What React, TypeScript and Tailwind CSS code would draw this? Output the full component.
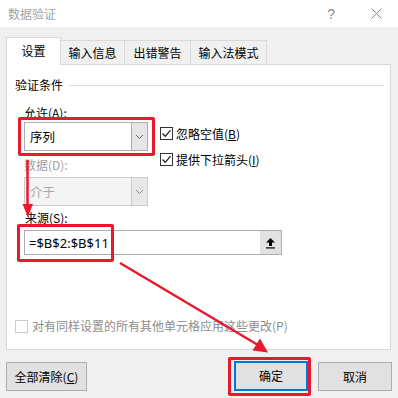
import React from "react";

const font = { fontFamily: '"Noto Sans CJK SC", "Noto Sans", sans-serif' };

function Chevron({ color = "#606060" }: { color?: string }) {
  return (
    <svg width="9" height="6" viewBox="0 0 9 6">
      <path d="M1 1 L4.5 4.5 L8 1" fill="none" stroke={color} strokeWidth="1" />
    </svg>
  );
}

function Check({ checked }: { checked: boolean }) {
  return (
    <div
      className={
        "w-[13px] h-[13px] bg-white border flex items-center justify-center " +
        (checked ? "border-[#333333]" : "border-[#cccccc]")
      }
    >
      {checked && (
        <svg width="11" height="11" viewBox="0 0 11 11">
          <path d="M1.5 5.5 L4.3 8.3 L9.5 2.2" fill="none" stroke="#222" strokeWidth="1.3" />
        </svg>
      )}
    </div>
  );
}

function Combo({ text, disabled }: { text: string; disabled?: boolean }) {
  return (
    <div
      className={
        "w-[124px] h-[29px] border flex " +
        (disabled ? "border-[#cccccc] bg-[#f4f4f4]" : "border-[#adadad] bg-white")
      }
    >
      <div className={"flex-1 flex items-center pl-[5px] text-[12.5px] " + (disabled ? "text-[#a8a8a8]" : "text-black")}>
        {text}
      </div>
      <div
        className={
          "w-[16px] flex items-center justify-center border-l " +
          (disabled ? "border-[#cccccc] bg-[#e8e8e8]" : "border-[#adadad] bg-[#e5e5e5]")
        }
      >
        <Chevron color={disabled ? "#8a8a8a" : "#606060"} />
      </div>
    </div>
  );
}

export default function App() {
  return (
    <div className="relative w-[398px] h-[398px] bg-[#f0f0f0] overflow-hidden text-[12px] leading-[16px]" style={font}>
      {/* title bar */}
      <div className="h-[27px] bg-white flex items-center pl-[8px] text-[#a3a3a3]">
        <span className="text-[12px]">数据验证</span>
        <span className="ml-auto mr-[36px] text-[14px] text-[#8a8a8a]" style={{ fontFamily: '"Liberation Sans", sans-serif' }}>?</span>
        <svg width="11" height="11" viewBox="0 0 11 11" className="mr-[16px]">
          <path d="M0.5 0.5 L10.5 10.5 M10.5 0.5 L0.5 10.5" stroke="#8a8a8a" strokeWidth="1" />
        </svg>
      </div>

      {/* tabs */}
      <div className="mt-[10px] pl-[6px] flex items-end h-[27px]">
        <div className="relative z-10 w-[55px] h-[28px] -mb-px bg-white border border-b-0 border-[#d9d9d9] flex items-center justify-center pb-[2px] text-black">
          设置
        </div>
        <div className="w-[64px] h-[24px] border border-l-0 border-b-0 border-[#d9d9d9] flex items-center justify-center text-black">输入信息</div>
        <div className="w-[66px] h-[24px] border border-l-0 border-b-0 border-[#d9d9d9] flex items-center justify-center text-black">出错警告</div>
        <div className="w-[76px] h-[24px] border border-l-0 border-b-0 border-[#d9d9d9] flex items-center justify-center text-black">输入法模式</div>
      </div>

      {/* panel */}
      <div className="ml-[6px] w-[385px] h-[286px] bg-white border border-[#d9d9d9] flex flex-col">
        <div className="mt-[12px] flex items-center pl-[8px] pr-[6px] text-black">
          <span>验证条件</span>
          <div className="flex-1 ml-[6px] h-px bg-[#dcdcdc]" />
        </div>

        <div className="mt-[12px] pl-[17px] flex">
          <div className="flex flex-col">
            <div className="h-[16px] text-black">允许(A):</div>
            <div className="mt-[1px]">
              <Combo text="序列" />
            </div>
            <div className="mt-[6px] h-[16px] text-[#a0a0a0]">数据(D):</div>
            <div className="mt-[4px]">
              <Combo text="介于" disabled />
            </div>
          </div>
          <div className="ml-[12px] flex flex-col gap-[13px] pt-[22px]">
            <div className="flex items-center gap-[3px] h-[13px]">
              <Check checked />
              <span className="text-black">
                忽略空值(<span className="underline">B</span>)
              </span>
            </div>
            <div className="flex items-center gap-[3px] h-[13px]">
              <Check checked />
              <span className="text-black">
                提供下拉箭头(<span className="underline">I</span>)
              </span>
            </div>
          </div>
        </div>

        <div className="mt-[4px] pl-[18px] h-[16px] text-black">
          来源(<span className="underline">S</span>):
        </div>
        <div className="mt-[4px] ml-[17px] w-[258px] h-[25px] border border-[#adadad] bg-white flex">
          <div className="flex-1 flex items-center pl-[4px] text-[13px] text-black" style={{ fontFamily: '"Noto Sans", sans-serif' }}>
            =$B$2:$B$11
          </div>
          <div className="w-[21px] bg-[#e1e1e1] flex items-center justify-center">
            <svg width="11" height="12" viewBox="0 0 11 12">
              <path d="M5.5 1 L10 5.5 L7 5.5 L7 9 L4 9 L4 5.5 L1 5.5 Z" fill="#000" />
              <rect x="1" y="10.3" width="9" height="1.2" fill="#000" />
            </svg>
          </div>
        </div>

        <div className="mt-auto mb-[15px] pl-[8px] flex items-center gap-[4px]">
          <Check checked={false} />
          <span className="text-[#8d8d8d] text-[12px]">对有同样设置的所有其他单元格应用这些更改(P)</span>
        </div>
      </div>

      {/* buttons */}
      <div className="mt-[12px] px-[6px] flex">
        <button className="w-[81px] h-[29px] bg-[#e1e1e1] border border-[#adadad] text-black text-[12px]">
          全部清除(<span className="underline">C</span>)
        </button>
        <button className="ml-auto w-[74px] h-[30px] -mt-px bg-[#e1e1e1] border-2 border-[#0078d7] text-black text-[12px]">
          确定
        </button>
        <button className="ml-[10px] w-[74px] h-[29px] bg-[#e1e1e1] border border-[#adadad] text-black text-[12px]">
          取消
        </button>
      </div>

      {/* annotation boxes */}
      <div className="absolute left-[18px] top-[117px] w-[137px] h-[39px] border-[3px] border-[#e8192c] rounded-[2px]" />
      <div className="absolute left-[17px] top-[224px] w-[97px] h-[38px] border-[3px] border-[#e8192c] rounded-[2px]" />
      <div className="absolute left-[228px] top-[357px] w-[83px] h-[39px] border-[3px] border-[#e8192c] rounded-[2px]" />

      {/* annotation arrows */}
      <svg className="absolute left-0 top-0 pointer-events-none" width="398" height="398" viewBox="0 0 398 398">
        <line x1="27.5" y1="160" x2="27.5" y2="207" stroke="#e8192c" strokeWidth="2.5" />
        <polygon points="22.5,204 33,204 27.8,217" fill="#e8192c" />
        <line x1="120" y1="263" x2="258" y2="345" stroke="#e8192c" strokeWidth="2.5" />
        <polygon points="252.5,350.5 260,338.5 268,352.5" fill="#e8192c" />
      </svg>
    </div>
  );
}
